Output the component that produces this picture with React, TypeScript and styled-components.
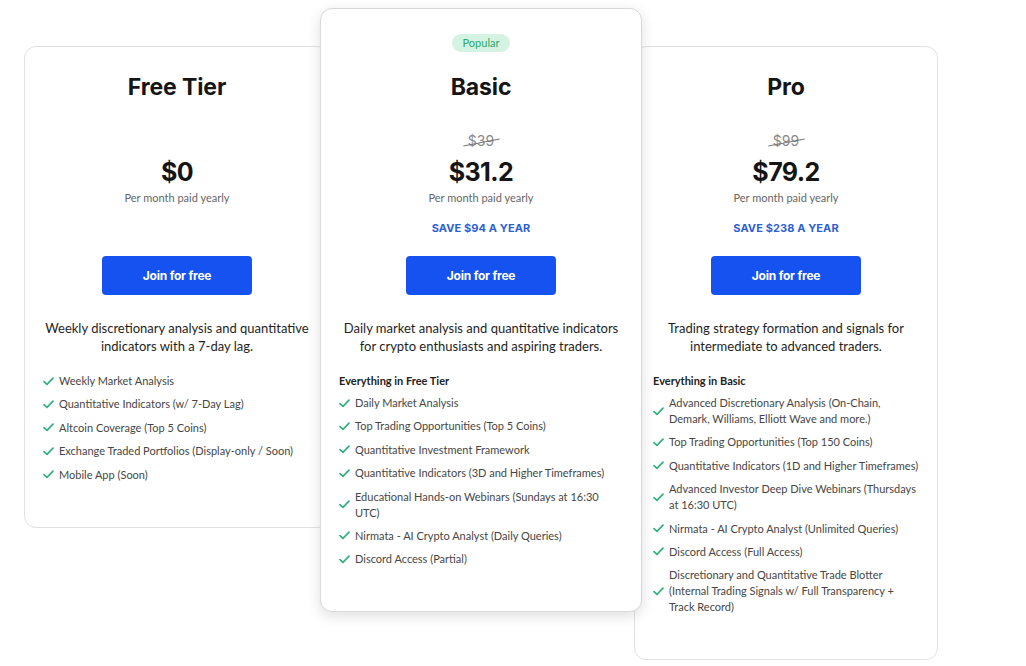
import React from "react";
import styled, { createGlobalStyle } from "styled-components";

const Global = createGlobalStyle`
  html, body { margin: 0; padding: 0; background: #ffffff; }
  body { font-family: "Lato", "Noto Sans", sans-serif; color: #222; -webkit-font-smoothing: antialiased; }
  * { box-sizing: border-box; }
`;

const Row = styled.div`
  display: flex;
  align-items: flex-start;
  padding: 8px 0 0 24px;
  width: 1026px;
`;

const Card = styled.div<{ $featured?: boolean; $w: number }>`
  position: relative;
  width: ${(p) => p.$w}px;
  flex: none;
  display: flex;
  flex-direction: column;
  align-items: center;
  background: #fff;
  border: 1px solid ${(p) => (p.$featured ? "#d9d9d9" : "#e2e2e2")};
  border-radius: 12px;
  padding: ${(p) => (p.$featured ? "25px" : "26px")} 18px 44px 18px;
  margin-top: ${(p) => (p.$featured ? 0 : 38)}px;
  z-index: ${(p) => (p.$featured ? 2 : 1)};
  box-shadow: ${(p) => (p.$featured ? "0 4px 14px rgba(0,0,0,0.13)" : "none")};
  &.basic { margin-left: -10px; margin-right: -8px; }
`;

const Badge = styled.div`
  height: 18px;
  padding: 0 11px;
  border-radius: 9px;
  background: #d4f3e2;
  color: #2aa866;
  font-size: 11px;
  line-height: 18px;
  margin-bottom: 21px;
`;

const Title = styled.h2`
  margin: 0;
  font-family: "Inter", sans-serif;
  font-weight: 700;
  font-size: 23px;
  line-height: 28px;
  color: #151515;
  letter-spacing: -0.1px;
`;

const Strike = styled.div<{ $hidden?: boolean }>`
  position: relative;
  margin-top: 31px;
  height: 18px;
  line-height: 18px;
  font-size: 14px;
  color: #8a8a8a;
  font-family: "Inter", sans-serif;
  visibility: ${(p) => (p.$hidden ? "hidden" : "visible")};
  &::after {
    content: "";
    position: absolute;
    left: -5px;
    right: -6px;
    top: 10px;
    height: 1px;
    background: #777;
    transform: rotate(-11deg);
  }
`;

const Price = styled.div`
  margin-top: 6px;
  font-family: "Inter", sans-serif;
  font-weight: 700;
  font-size: 25px;
  line-height: 32px;
  color: #151515;
  letter-spacing: -0.6px;
`;

const Period = styled.div`
  margin-top: 2px;
  font-size: 11px;
  line-height: 16px;
  color: #666;
`;

const Save = styled.div<{ $hidden?: boolean }>`
  margin-top: 14px;
  font-family: "Inter", sans-serif;
  font-size: 11px;
  line-height: 16px;
  font-weight: 700;
  color: #2d5fd3;
  letter-spacing: 0.1px;
  visibility: ${(p) => (p.$hidden ? "hidden" : "visible")};
`;

const Button = styled.button`
  margin-top: 20px;
  width: 150px;
  height: 39px;
  border: none;
  border-radius: 4px;
  background: #1652f0;
  color: #fff;
  font-family: "Inter", sans-serif;
  font-weight: 700;
  font-size: 12px;
  letter-spacing: -0.2px;
  cursor: pointer;
`;

const Desc = styled.p`
  margin: 24px 0 0 0;
  font-size: 13px;
  line-height: 18px;
  text-align: center;
  color: #1e1e1e;
`;

const Features = styled.div<{ $extra: number }>`
  align-self: stretch;
  margin-top: 18px;
  margin-right: ${(p) => -p.$extra}px;
  display: flex;
  flex-direction: column;
`;

const FeatHead = styled.div`
  font-size: 11px;
  font-weight: 700;
  line-height: 16px;
  color: #222;
  margin-bottom: 6px;
`;

const List = styled.ul`
  list-style: none;
  margin: 0;
  padding: 0;
  display: flex;
  flex-direction: column;
  gap: 7.4px;
`;

const Item = styled.li`
  display: flex;
  align-items: center;
  gap: 5px;
  font-size: 11px;
  line-height: 16px;
  color: #464646;
`;

const Check = () => (
  <svg width="11" height="9" viewBox="0 0 11 9" style={{ flex: "none" }}>
    <polyline points="1,4.6 4,7.4 10,1.2" fill="none" stroke="#33b07e" strokeWidth="1.7" strokeLinecap="round" strokeLinejoin="round" />
  </svg>
);

type Plan = {
  name: string;
  popular?: boolean;
  old?: string;
  price: string;
  save?: string;
  desc: React.ReactNode;
  head?: string;
  items: string[];
  w: number;
  extra: number;
};

const plans: Plan[] = [
  {
    name: "Free Tier",
    price: "$0",
    desc: (
      <>
        Weekly discretionary analysis and quantitative
        <br />
        indicators with a 7-day lag.
      </>
    ),
    items: [
      "Weekly Market Analysis",
      "Quantitative Indicators (w/ 7-Day Lag)",
      "Altcoin Coverage (Top 5 Coins)",
      "Exchange Traded Portfolios (Display-only / Soon)",
      "Mobile App (Soon)",
    ],
    w: 306,
    extra: 0,
  },
  {
    name: "Basic",
    popular: true,
    old: "$39",
    price: "$31.2",
    save: "SAVE $94 A YEAR",
    desc: (
      <>
        Daily market analysis and quantitative indicators
        <br />
        for crypto enthusiasts and aspiring traders.
      </>
    ),
    head: "Everything in Free Tier",
    items: [
      "Daily Market Analysis",
      "Top Trading Opportunities (Top 5 Coins)",
      "Quantitative Investment Framework",
      "Quantitative Indicators (3D and Higher Timeframes)",
      "Educational Hands-on Webinars (Sundays at 16:30 UTC)",
      "Nirmata - AI Crypto Analyst (Daily Queries)",
      "Discord Access (Partial)",
    ],
    w: 322,
    extra: 0,
  },
  {
    name: "Pro",
    old: "$99",
    price: "$79.2",
    save: "SAVE $238 A YEAR",
    desc: (
      <>
        Trading strategy formation and signals for
        <br />
        intermediate to advanced traders.
      </>
    ),
    head: "Everything in Basic",
    items: [
      "Advanced Discretionary Analysis (On-Chain, Demark, Williams, Elliott Wave and more.)",
      "Top Trading Opportunities (Top 150 Coins)",
      "Quantitative Indicators (1D and Higher Timeframes)",
      "Advanced Investor Deep Dive Webinars (Thursdays at 16:30 UTC)",
      "Nirmata - AI Crypto Analyst (Unlimited Queries)",
      "Discord Access (Full Access)",
      "Discretionary and Quantitative Trade Blotter (Internal Trading Signals w/ Full Transparency + Track Record)",
    ],
    w: 304,
    extra: 1,
  },
];

export default function App() {
  return (
    <>
      <Global />
      <Row>
        {plans.map((p) => (
          <Card key={p.name} $w={p.w} $featured={p.popular} className={p.popular ? "basic" : undefined}>
            {p.popular && <Badge>Popular</Badge>}
            <Title>{p.name}</Title>
            <Strike $hidden={!p.old}>{p.old ?? "$0"}</Strike>
            <Price>{p.price}</Price>
            <Period>Per month paid yearly</Period>
            <Save $hidden={!p.save}>{p.save ?? "SAVE"}</Save>
            <Button>Join for free</Button>
            <Desc>{p.desc}</Desc>
            <Features $extra={p.extra}>
              {p.head && <FeatHead>{p.head}</FeatHead>}
              <List>
                {p.items.map((it) => (
                  <Item key={it}>
                    <Check />
                    <span>{it}</span>
                  </Item>
                ))}
              </List>
            </Features>
          </Card>
        ))}
      </Row>
    </>
  );
}
